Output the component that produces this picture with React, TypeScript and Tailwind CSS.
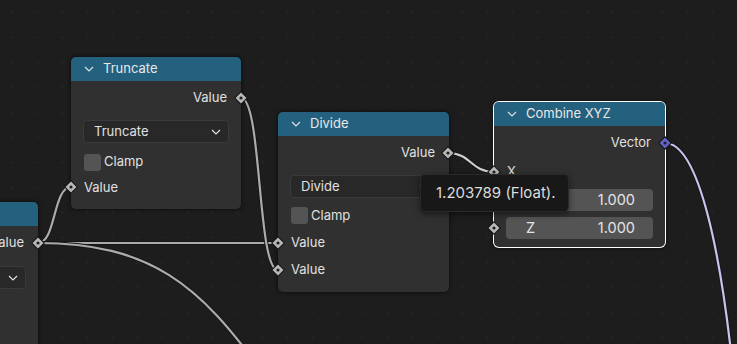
import React from "react";

const font = "font-['Inter','Noto_Sans',sans-serif]";

function Chevron({ className = "" }: { className?: string }) {
  return (
    <svg width="10" height="6" viewBox="0 0 10 6" className={className}>
      <path d="M1 1 L5 5 L9 1" fill="none" stroke="#e0e0e0" strokeWidth="1.2" />
    </svg>
  );
}

function Header({ title }: { title: string }) {
  return (
    <div className="flex h-[24px] items-center gap-[9px] rounded-t-[5px] bg-[#24617f] pl-[13px] text-[13px] text-[#e8e8e8]">
      <Chevron />
      <span>{title}</span>
    </div>
  );
}

function OutRow({ label }: { label: string }) {
  return (
    <div className="flex h-[22px] items-center justify-end pr-[14px] text-[13px] text-[#e0e0e0]">{label}</div>
  );
}

function InRow({ label, className = "" }: { label: string; className?: string }) {
  return (
    <div className={`flex h-[22px] items-center pl-[13px] text-[13px] text-[#e0e0e0] ${className}`}>{label}</div>
  );
}

function Dropdown({ label, className = "" }: { label: string; className?: string }) {
  return (
    <div
      className={`mx-[12px] flex h-[23px] items-center justify-between rounded-[4px] border border-[#3a3a3a] bg-[#282828] pl-[10px] pr-[7px] text-[13px] text-[#e0e0e0] ${className}`}
    >
      <span>{label}</span>
      <Chevron />
    </div>
  );
}

function Clamp({ className = "" }: { className?: string }) {
  return (
    <div className={`flex h-[18px] items-center gap-[3px] pl-[13px] text-[13px] text-[#e0e0e0] ${className}`}>
      <div className="h-[17px] w-[17px] rounded-[3px] bg-[#545454]" />
      <span>Clamp</span>
    </div>
  );
}

function Field({ label, value, className = "" }: { label: string; value: string; className?: string }) {
  return (
    <div
      className={`mx-[12px] flex h-[22px] items-center justify-between rounded-[4px] bg-[#545454] pl-[20px] pr-[18px] text-[14.5px] text-[#e4e4e4] ${className}`}
    >
      <span>{label}</span>
      <span>{value}</span>
    </div>
  );
}

type Sock = { x: number; y: number; color?: string };

const sockets: Sock[] = [
  { x: 38, y: 243 },
  { x: 241, y: 98 },
  { x: 71, y: 187 },
  { x: 448, y: 153 },
  { x: 278, y: 243 },
  { x: 278, y: 270 },
  { x: 665, y: 143, color: "#6363c7" },
  { x: 494, y: 172 },
  { x: 494, y: 200 },
  { x: 494, y: 228 },
];

const links = [
  { d: "M38 243 C56 243 53 187 71 187", color: "#ababab" },
  { d: "M38 243 L278 243", color: "#ababab" },
  { d: "M38 243 C150 243 200 285 262 372", color: "#ababab" },
  { d: "M241 98 C262 98 257 270 278 270", color: "#ababab" },
  { d: "M448 153 C471 153 471 172 494 172", color: "#cfcfcf" },
  { d: "M665 143 C700 143 722 260 734 380", color: "#c4c4ee" },
];

export default function App() {
  return (
    <div
      className={`relative h-[344px] w-[737px] overflow-hidden bg-[#1d1d1d] bg-[radial-gradient(circle,#232323_1px,transparent_1.5px)] bg-[length:25px_25px] ${font}`}
    >
      {/* links */}
      <svg className="absolute inset-0" width="737" height="344">
        {links.map((l, i) => (
          <g key={i}>
            <path d={l.d} fill="none" stroke="#161616" strokeWidth="4" />
            <path d={l.d} fill="none" stroke={l.color} strokeWidth="2.2" />
          </g>
        ))}
      </svg>

      {/* left node, mostly off screen */}
      <div className="absolute left-[-133px] top-[202px] h-[160px] w-[171px] rounded-[5px] bg-[#303030] shadow-[0_0_4px_rgba(0,0,0,0.7)]">
        <div className="h-[24px] rounded-t-[5px] bg-[#24617f]" />
        <div className="pt-[6px]">
          <OutRow label="Value" />
        </div>
        <Dropdown label="" className="mt-[12px]" />
      </div>

      {/* Truncate */}
      <div className="absolute left-[71px] top-[57px] flex h-[152px] w-[170px] flex-col rounded-[5px] bg-[#303030] shadow-[0_0_4px_rgba(0,0,0,0.7)]">
        <Header title="Truncate" />
        <div className="pt-[6px]">
          <OutRow label="Value" />
        </div>
        <Dropdown label="Truncate" className="mt-[11px]" />
        <Clamp className="mt-[10px]" />
        <InRow label="Value" className="mt-[6px]" />
      </div>

      {/* Divide */}
      <div className="absolute left-[278px] top-[112px] flex h-[180px] w-[171px] flex-col rounded-[5px] bg-[#303030] shadow-[0_0_4px_rgba(0,0,0,0.7)]">
        <Header title="Divide" />
        <div className="pt-[6px]">
          <OutRow label="Value" />
        </div>
        <Dropdown label="Divide" className="mt-[11px]" />
        <Clamp className="mt-[8px] h-[19px]" />
        <InRow label="Value" className="mt-[7px]" />
        <InRow label="Value" className="mt-[5px]" />
      </div>

      {/* Combine XYZ (active) */}
      <div className="absolute left-[494px] top-[102px] flex h-[145px] w-[171px] flex-col rounded-[5px] bg-[#303030] shadow-[0_0_0_1px_#ffffff,0_0_5px_rgba(0,0,0,0.7)]">
        <Header title="Combine XYZ" />
        <div className="pt-[6px]">
          <OutRow label="Vector" />
        </div>
        <InRow label="X" className="mt-[7px]" />
        <Field label="Y" value="1.000" className="mt-[6px] h-[21px]" />
        <Field label="Z" value="1.000" className="mt-[6px]" />
      </div>

      {/* sockets */}
      <svg className="absolute inset-0" width="737" height="344">
        {sockets.map((s, i) => (
          <g key={i} transform={`translate(${s.x} ${s.y})`}>
            <path d="M0 -7 L7 0 L0 7 L-7 0 Z" fill="#141414" />
            <path d="M0 -5.5 L5.5 0 L0 5.5 L-5.5 0 Z" fill={s.color ?? "#b8b8b8"} />
            <circle r="1.6" fill="#202020" />
          </g>
        ))}
      </svg>

      {/* tooltip */}
      <div className="absolute left-[420px] top-[174px] flex h-[38px] w-[149px] items-center rounded-[5px] border border-[#2a2a2a] bg-[#181818] pl-[15px] text-[15px] text-[#dcdcdc] shadow-[0_2px_6px_rgba(0,0,0,0.5)]">
        1.203789 (Float).
      </div>
    </div>
  );
}
